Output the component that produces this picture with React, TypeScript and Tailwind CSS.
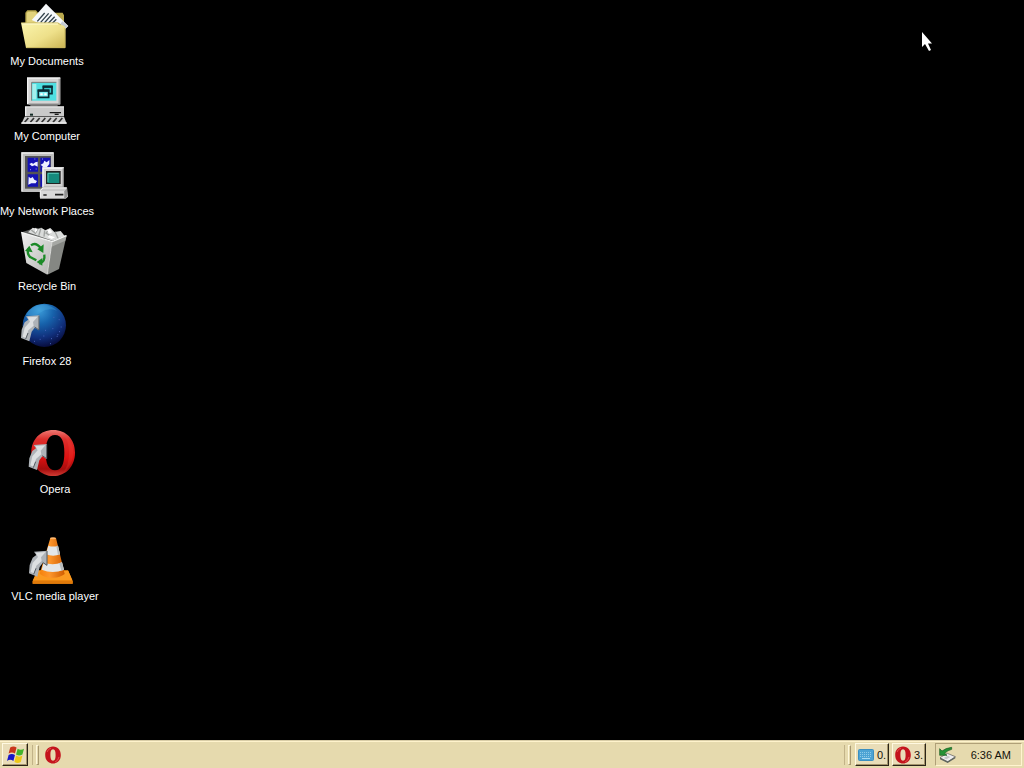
import type { ReactNode } from "react";

function DocumentsIcon() {
  return (
    <svg viewBox="63 6 144 144" className="size-12 overflow-visible" aria-hidden="true">
      <defs>
        <linearGradient id="folder" x1="0" y1="0" x2="1" y2="1">
          <stop offset="0" stopColor="#fbf5ad" />
          <stop offset="0.55" stopColor="#eee08a" />
          <stop offset="1" stopColor="#cbb452" />
        </linearGradient>
      </defs>
      <path d="M76 70V38l6-7h26l6 7h74l4 8v30z" fill="#b9a84e" />
      <path d="M80 68V40l4-5h22l5 7h30v26z" fill="#e2d27c" />
      <path d="M138 11l67 67-22 22-88-40z" fill="#f6f8fb" />
      <path d="M203 78l-20 20-4-24 8-10z" fill="#c3cad2" />
      <path d="M112 64l22-25M122 67l24-27M133 69l22-25M145 70l19-20M157 70l12-12" stroke="#32424c" strokeWidth="4" />
      <path d="M63 68h112l8 6 10 4 3 8v58H78z" fill="url(#folder)" />
      <path d="M64 69h110l9 6M79 143h116V84" fill="none" stroke="#c8b65e" strokeWidth="3" />
      <path d="M66 72h108" stroke="#fffbd0" strokeWidth="3" />
    </svg>
  );
}

function ComputerIcon() {
  return (
    <svg viewBox="63 21 144 144" className="size-12 overflow-visible" aria-hidden="true">
      <path d="M83 24h98v79H83z" fill="#d4d4d4" />
      <path d="M83 103V24h98" fill="none" stroke="#f4f4f4" strokeWidth="4" />
      <path d="M178 26v76H86" fill="none" stroke="#a5a5a5" strokeWidth="5" />
      <path d="M95 37h74v55H95z" fill="#4fdfe2" />
      <path d="M95 92V37h74" fill="none" stroke="#777" strokeWidth="3" />
      <path d="M97 42h12v46H97z" fill="#a3efed" />
      <path d="M130 50h26v21h-26z" fill="#35c8cb" stroke="#092b35" strokeWidth="5" />
      <path d="M128 50h30" stroke="#092b35" strokeWidth="7" />
      <path d="M115 61h31v21h-31z" fill="#7ff0f4" stroke="#092b35" strokeWidth="5" />
      <path d="M113 62h35" stroke="#092b35" strokeWidth="7" />
      <path d="M121 73h7m5 0h7" stroke="#fff" strokeWidth="6" />
      <path d="M91 104h82v6H91z" fill="#777" />
      <path d="M77 112h115v27H77z" fill="#cacaca" />
      <path d="M77 139v-28h115" fill="none" stroke="#efefef" strokeWidth="4" />
      <path d="M149 128h34M164 133h12" stroke="#171717" strokeWidth="4" />
      <path d="M90 131h9v6h-9z" fill="#122a25" />
      <path d="M74 140h118l8 21H64z" fill="#cfcfcf" />
      <path d="M74 157l11-13m6 13l11-13m6 13l11-13m6 13l11-13m6 13l11-13m6 13l11-13m6 13l11-13" stroke="#333" strokeWidth="5" />
      <path d="M64 159h136" stroke="#ededed" strokeWidth="4" />
    </svg>
  );
}

function NetworkIcon() {
  return (
    <svg viewBox="63 21 144 144" className="size-12 overflow-visible" aria-hidden="true">
      <path d="M64 22h98v119H64z" fill="#bebebe" />
      <path d="M66 139V24h94" fill="none" stroke="#eee" strokeWidth="4" />
      <path d="M75 33h78v98H75z" fill="#555" />
      <path d="M83 38h31v42H83zM121 38h30v42h-30zM83 88h31v37H83zM121 88h30v37h-30z" fill="#1412b4" />
      <path d="M88 57l8-4 3 4 7-5 7-2v15l-9-4-8 3zM122 59l8-4 3-8 7 5 8-7v12l-7 9-11 1zM86 95l6 5 6-4 5 8 8 4-4 7H94l-9 4z" fill="#edf0ff" />
      <path d="M103 42h3m20 0h3M90 74h3m14-2h3m20 4h3" stroke="#9494e9" strokeWidth="3" />
      <path d="M127 67h65v61h-65z" fill="#d1d1d1" />
      <path d="M129 126V69h62" fill="none" stroke="#fafafa" strokeWidth="4" />
      <path d="M190 70v57h-60" fill="none" stroke="#898989" strokeWidth="4" />
      <path d="M138 78h44v39h-44z" fill="#222" />
      <path d="M142 83h36v31h-36z" fill="#158a7d" />
      <path d="M144 111V85h32" fill="none" stroke="#5bc7b8" strokeWidth="3" />
      <path d="M127 127h74l3 28-7 6h-77v-25z" fill="#c7c7c7" />
      <path d="M121 138h72v21h-72z" fill="#d9d9d9" />
      <path d="M121 157v-20l8-8h70" fill="none" stroke="#f2f2f2" strokeWidth="3" />
      <path d="M165 149h25M130 150h10" stroke="#202020" strokeWidth="5" />
      <path d="M193 139l8-9v25l-8 6z" fill="#929292" />
    </svg>
  );
}

function RecycleIcon() {
  return (
    <svg viewBox="63 21 144 144" className="size-12 overflow-visible" aria-hidden="true">
      <defs>
        <linearGradient id="bin-front" x1="0" y1="0" x2="1" y2="1">
          <stop offset="0" stopColor="#f0f0f0" />
          <stop offset="1" stopColor="#b4b5b2" />
        </linearGradient>
      </defs>
      <path d="M65 37l42-14 92 24-42 18z" fill="#606260" />
      <path d="M84 37l14-14 16 4 10-4 12 8 15-7 12 12 19-3 12 15-36 14z" fill="#dadcdb" />
      <path d="M94 30l12 10 8-13m9-3l-7 24m18-17l-2 19m18-25l-12 14 21 13m6-17l9 20" fill="none" stroke="#a0a3a1" strokeWidth="4" />
      <path d="M106 24l7 5-8 10zm35 6l8-3 8 10-10 4zm8 15l16 7-10 5-12-6z" fill="#fff" />
      <path d="M63 36l94 29-15 99-63-35z" fill="url(#bin-front)" />
      <path d="M157 65l43-19-23 101-35 17z" fill="#858783" />
      <path d="M157 65l43-19-4 16-41 18z" fill="#a6a8a4" />
      <path d="M64 37l93 28 42-18" fill="none" stroke="#f4f5f4" strokeWidth="4" />
      <path d="M156 66l-14 96" stroke="#d8d9d6" strokeWidth="3" />
      <g fill="none" stroke="#1b8a27" strokeWidth="7">
        <path d="M93 76q14-11 30 9" />
        <path d="M91 112q-12-12-5-26" />
        <path d="M133 104q3 22-15 27" />
        <path d="M109 121l-20-11" />
      </g>
      <path d="M112 88l19-15-1 26zM75 93l13-16 10 20zM127 114l-17 12 17 11z" fill="#1b8a27" />
    </svg>
  );
}

function ShortcutArrow() {
  return (
    <>
      <path d="M78 64l40-3-1 45-13-8-9 12-7 29-25-10 2-25 9-22 11-8z" fill="#aeb3b8" />
      <path d="M83 67l30-2-14 16 2 11-16 14-7 23-10-4 6-27 16-18z" fill="#dcdfe1" />
      <path d="M117 62v43l-13-9M77 132l7-18" fill="none" stroke="#555b61" strokeWidth="3" />
    </>
  );
}

function FirefoxIcon() {
  return (
    <svg viewBox="63 21 144 144" className="size-12 overflow-visible" aria-hidden="true">
      <defs>
        <radialGradient id="globe" cx="0.38" cy="0.15" r="0.85">
          <stop offset="0" stopColor="#3c9ddb" />
          <stop offset="0.38" stopColor="#1763ac" />
          <stop offset="0.75" stopColor="#102f7b" />
          <stop offset="1" stopColor="#080e40" />
        </radialGradient>
      </defs>
      <circle cx="133" cy="91" r="65" fill="url(#globe)" />
      <path d="M78 59q17-29 52-30 25 1 41 18-28-10-47 4-19 16-46 8z" fill="#4ba9df" opacity="0.35" />
      <path d="M160 67h3m13 7h3m-44 32h3m19-5h3m17 9h3m-50 13h3m20 8h3m14-7h3m-54 9h3m28 13h3m-51-7h3m77-43h3m-13 23h3" stroke="#4660b8" strokeWidth="3" />
      <ShortcutArrow />
    </svg>
  );
}

function OperaIcon() {
  return (
    <svg viewBox="87 15 144 144" className="size-12 overflow-visible" aria-hidden="true">
      <defs>
        <linearGradient id="opera-ring" x1="0" y1="0" x2="0" y2="1">
          <stop offset="0" stopColor="#ee7a74" />
          <stop offset="0.2" stopColor="#dc2f2c" />
          <stop offset="0.6" stopColor="#dc1212" />
          <stop offset="0.85" stopColor="#a50d0d" />
          <stop offset="1" stopColor="#d03c34" />
        </linearGradient>
      </defs>
      <path fillRule="evenodd" d="M160 15c39 0 65 28 65 68s-27 70-65 70-66-30-66-70 27-68 66-68zm5 15c-20 0-28 22-28 53s8 53 28 53 28-20 28-53-8-53-28-53z" fill="url(#opera-ring)" />
      <path d="M188 27q33 20 32 56t-31 61q19-25 18-62t-19-55z" fill="#ff4a3a" opacity="0.2" />
      <g transform="translate(23 -4)">
        <ShortcutArrow />
      </g>
    </svg>
  );
}

function VlcIcon() {
  return (
    <svg viewBox="87 21 144 144" className="size-12 overflow-visible" aria-hidden="true">
      <defs>
        <linearGradient id="cone" x1="0" y1="0" x2="1" y2="0">
          <stop offset="0" stopColor="#f5820c" />
          <stop offset="0.4" stopColor="#fd962c" />
          <stop offset="1" stopColor="#cf5c00" />
        </linearGradient>
      </defs>
      <path d="M113 121h91l14 32v8H98v-8z" fill="#ef870d" />
      <path d="M112 122h93l12 29H99z" fill="#fb9a20" />
      <path d="M98 152h120v9H98z" fill="#e07a0a" />
      <path d="M151 24h17l26 108q-15 12-37 11-24 0-38-12z" fill="url(#cone)" />
      <path d="M145 47q14 5 29 0l6 26q-20 8-42 0z" fill="#e3e6e8" />
      <path d="M131 97q26 12 55 0l6 22q-34 14-67 0z" fill="#e3e6e8" />
      <path d="M169 48l5-1 6 26-6 2zM178 100l8-3 6 22-8 3z" fill="#b5babd" />
      <ellipse cx="159" cy="25" rx="9" ry="3" fill="#ffb76c" />
      <g transform="translate(24 1)">
        <ShortcutArrow />
      </g>
    </svg>
  );
}

function OperaSmall() {
  return (
    <svg viewBox="0 0 16 18" className="h-[18px] w-4 shrink-0" aria-hidden="true">
      <path fillRule="evenodd" d="M8 0.500c5 0 7.800 3.600 7.800 8.500s-2.800 8.500-7.800 8.500S0.200 13.900 0.200 9 3 0.500 8 0.500zm0 2.800C6 3.300 5.400 5.500 5.400 9s0.600 5.700 2.600 5.700 2.600-2.200 2.600-5.700-0.600-5.700-2.600-5.700z" fill="#c4141d" />
      <path d="M2 6q1-3 4-4M14 11q-1 4-4 5" fill="none" stroke="#e2514e" />
    </svg>
  );
}

function WindowsFlag() {
  return (
    <svg viewBox="0 0 16 16" className="size-[17px]" aria-hidden="true">
      <path d="M3 1.500q3-2 6 0L7.500 7q-3-2-6 0z" fill="#c9371d" />
      <path d="M10 2.500q3 2 6 0L14.500 8q-3 2-6 0z" fill="#43b52b" />
      <path d="M1.500 8.500q3-2 6 0L6 14q-3-2-6 0z" fill="#1818c8" />
      <path d="M8.500 9q3 2 6 0L13 15q-3 2-6 0z" fill="#edc918" />
    </svg>
  );
}

function KeyboardIcon() {
  return (
    <svg viewBox="0 0 16 16" className="size-4 shrink-0" aria-hidden="true">
      <rect x="0.500" y="2.500" width="15" height="11" rx="1" fill="#4ca3d4" stroke="#3b8fc0" />
      <path d="M2 5.500h12M2 7.500h12M2 9.500h12" stroke="#8fcbe8" strokeDasharray="1 1" />
      <path d="M4 11.500h8" stroke="#a9dbf1" />
    </svg>
  );
}

function EjectIcon() {
  return (
    <svg viewBox="0 0 51 51" className="size-[17px] overflow-visible" aria-hidden="true">
      <path d="M3 35l22-13 24 10-23 16z" fill="#ededed" stroke="#555" strokeWidth="2" />
      <path d="M3 35v5l23 11v-5zM26 46l23-14v5L26 51z" fill="#60665f" />
      <path d="M14 36l12-7 8 4-12 7z" fill="#c5c5c5" />
      <path d="M2 8v20h22l-7-6q9-9 21-12V4Q20 6 9 15z" fill="#259235" stroke="#165a20" strokeWidth="2" />
    </svg>
  );
}

const shortcuts: { name: string; icon: ReactNode; place: string }[] = [
  { name: "My Documents", icon: <DocumentsIcon />, place: "" },
  { name: "My Computer", icon: <ComputerIcon />, place: "" },
  { name: "My Network Places", icon: <NetworkIcon />, place: "" },
  { name: "Recycle Bin", icon: <RecycleIcon />, place: "" },
  { name: "Firefox 28", icon: <FirefoxIcon />, place: "" },
  { name: "Opera", icon: <OperaIcon />, place: "ml-2 mt-[53px]" },
  { name: "VLC media player", icon: <VlcIcon />, place: "ml-2 mt-8" },
];

function Grip() {
  return (
    <div className="flex h-5 gap-[3px]" aria-hidden="true">
      <span className="w-px bg-[#c2b388]" />
      <span className="w-[3px] border border-t-[#fff8dc] border-l-[#fff8dc] border-r-[#a89870] border-b-[#a89870]" />
    </div>
  );
}

const raised =
  "flex h-[23px] items-center border border-t-[#fff9e1] border-l-[#fff9e1] border-r-[#2b2518] border-b-[#2b2518] bg-[#e9ddb8] shadow-[inset_-1px_-1px_0_#a3946c]";

export default function App() {
  return (
    <div className="flex min-h-screen flex-col overflow-hidden bg-black font-['Liberation_Sans',Arial,sans-serif] text-[11px] leading-[14px]">
      <main className="relative flex-1">
        <nav aria-label="Desktop" className="flex flex-col items-start">
          {shortcuts.map(({ name, icon, place }) => (
            <button key={name} type="button" className={`flex h-[75px] w-[94px] flex-col items-center gap-1 pt-0.5 text-white ${place}`}>
              <span className="pr-1">{icon}</span>
              <span className="whitespace-nowrap">{name}</span>
            </button>
          ))}
        </nav>
        <svg viewBox="0 0 10 20" className="absolute top-[32px] right-[92px] h-5 w-2.5" aria-hidden="true">
          <path d="M0 0v15l3-3 4 7 2-1-3-6.500h4z" fill="#fff" />
        </svg>
      </main>
      <footer className="flex h-7 items-center border-t border-[#d9cda7] bg-[#e6daae] pr-0.5 pl-0.5 text-[#15120b] shadow-[inset_0_1px_0_#fff3cc]">
        <button type="button" aria-label="Start" className={`${raised} w-[26px] justify-center`}>
          <WindowsFlag />
        </button>
        <div className="ml-1">
          <Grip />
        </div>
        <button type="button" aria-label="Opera" className="ml-1.5 flex h-5 items-center">
          <OperaSmall />
        </button>
        <div className="ml-auto">
          <Grip />
        </div>
        <button type="button" className={`${raised} ml-1 w-[34px] gap-[3px] pl-0.5`}>
          <KeyboardIcon />
          <span>0.</span>
        </button>
        <button type="button" className={`${raised} ml-[3px] w-[34px] gap-[3px] pl-0.5`}>
          <OperaSmall />
          <span>3.</span>
        </button>
        <div className="ml-[9px] flex h-[23px] w-[87px] items-center justify-between border border-t-[#b0a078] border-l-[#b0a078] border-r-[#fff4cf] border-b-[#fff4cf] pr-2.5 pl-[3px]">
          <EjectIcon />
          <time>6:36 AM</time>
        </div>
      </footer>
    </div>
  );
}
